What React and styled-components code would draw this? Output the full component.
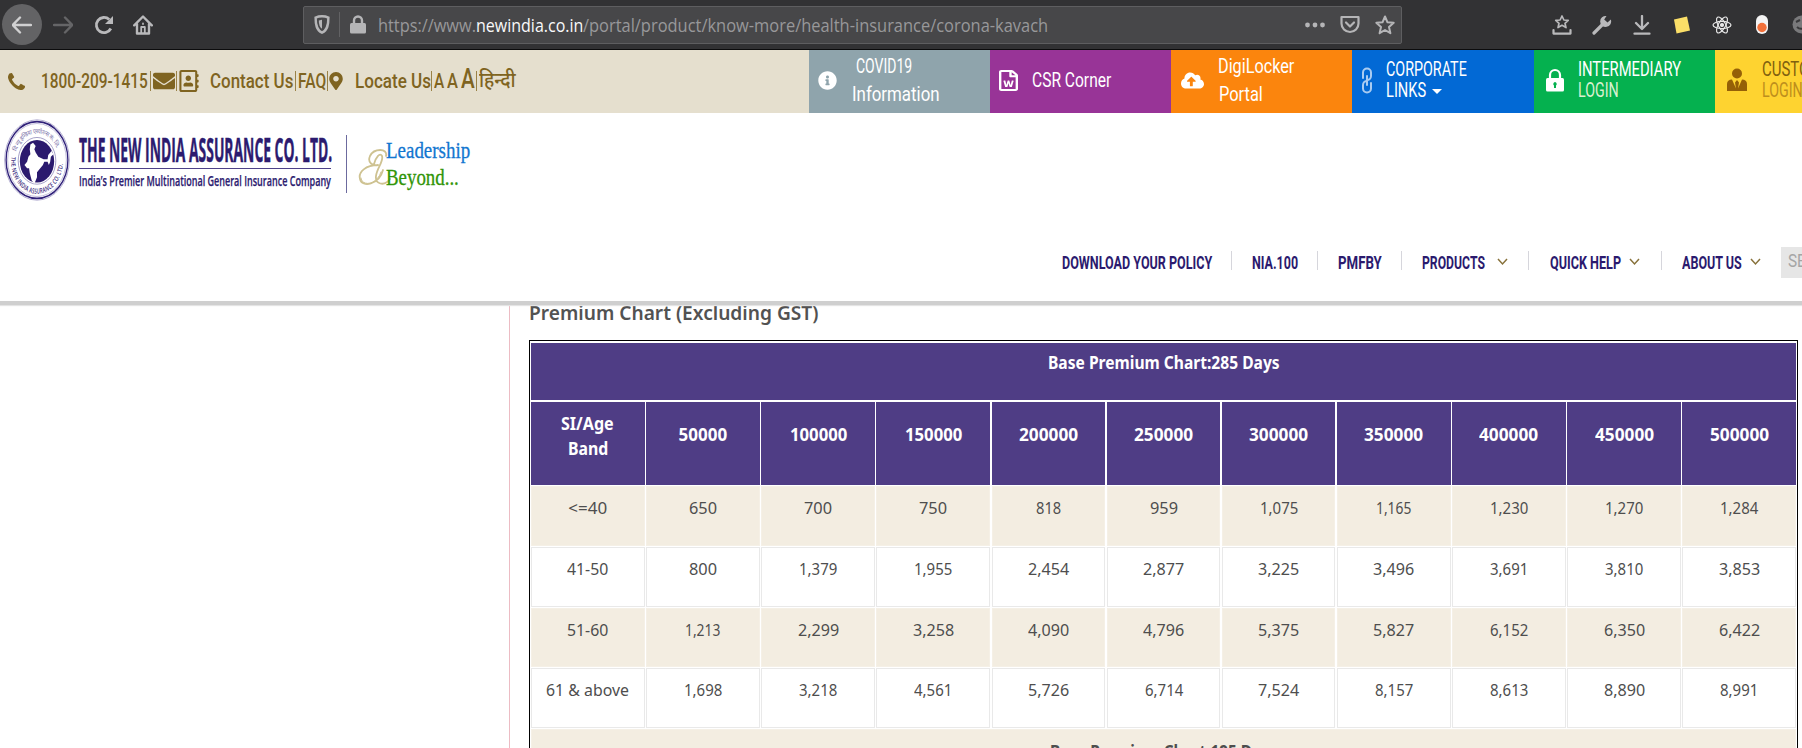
import React, { useLayoutEffect, useRef, useState } from "react";
import styled, { createGlobalStyle } from "styled-components";
import { FaInfoCircle, FaRegFileWord, FaCloudUploadAlt, FaEnvelope, FaRegAddressBook, FaMapMarkerAlt } from "react-icons/fa";

const Global = createGlobalStyle`
  *{box-sizing:border-box}
  body{margin:0;background:#fff;overflow:hidden;font-family:"Noto Sans","Open Sans",sans-serif}
  svg{display:block;flex:none}
`;

/* Text condensed to a fixed width */
const FitBox = styled.span`
  display:inline-block;flex:none;width:${p => p.$w}px;margin-left:${p => p.$ml || 0}px;
  white-space:nowrap;text-align:left;
`;
const FitInner = styled.span`display:inline-block;transform-origin:0 50%;white-space:pre;`;
function Fit({ w, ml, children, className }) {
  const ref = useRef(null);
  const [scale, setScale] = useState(1);
  useLayoutEffect(() => {
    if (ref.current.offsetWidth) setScale(w / ref.current.offsetWidth);
  }, [w]);
  return (
    <FitBox $w={w} $ml={ml} className={className}>
      <FitInner ref={ref} style={{ transform: `scaleX(${scale})` }}>{children}</FitInner>
    </FitBox>
  );
}

const Page = styled.div`width:1802px;height:748px;overflow:hidden;display:flex;flex-direction:column;background:#fff;`;

/* Browser toolbar */
const Chrome = styled.div`height:50px;flex:none;background:#323234;border-bottom:1px solid #0c0c0d;display:flex;align-items:center;padding-left:2px;color:#b9b9bb;overflow:hidden;`;
const BackButton = styled.span`width:40px;height:41px;border-radius:50%;background:#636365;display:flex;align-items:center;justify-content:center;color:#d0d0d1;flex:none;`;
const Glyph = styled.span`flex:none;margin-left:${p => p.$ml}px;color:${p => p.$c || "inherit"};display:block;`;
const UrlBar = styled.div`width:1099px;height:38px;margin:0 0 0 150px;flex:none;background:#474749;border:1px solid #5e5e60;border-radius:2px;display:flex;align-items:center;padding-left:10px;font-family:"Open Sans",sans-serif;font-size:17.5px;color:#98989a;`;
const UrlDivider = styled.span`width:1px;height:25px;background:#626264;margin-left:9px;`;
const Host = styled.span`color:#f9f9fa;`;
const UrlText = styled.div`display:flex;margin:0 0 0 12px;width:742px;flex:none;`;
const Padlock = styled.svg`margin-left:10px;`;

/* Utility strip */
const TopBar = styled.div`height:63px;flex:none;background:#e5dfce;display:flex;overflow:hidden;`;
const Contact = styled.div`width:809px;flex:none;display:flex;align-items:center;padding:0 0 1px 8px;color:#7f6421;font:500 20px Roboto,"Noto Sans Devanagari","Noto Sans",sans-serif;`;
const Bar = styled.span`width:1px;height:20px;background:#9a8247;margin-left:${p => p.$ml}px;flex:none;`;
const Size = styled(Fit)`font-size:${p => p.$fs}px;position:relative;top:${p => p.$up || 0}px;`;
const Tile = styled.div`width:${p => p.$w || 181}px;flex:none;background:${p => p.$bg};color:${p => p.$c || "#fff"};display:flex;align-items:center;padding:0 0 3px ${p => p.$pl}px;font:400 20.5px Roboto,sans-serif;`;
const Lines = styled.div`display:flex;flex-direction:column;margin-left:${p => p.$ml}px;line-height:${p => p.$lh}px;`;
const Line = styled.div`display:flex;align-items:center;height:${p => p.$h}px;color:${p => p.$c || "inherit"};`;
const Caret = styled.span`border:5px solid transparent;border-top-color:#fff;border-bottom:0;margin-left:6px;margin-top:1px;`;

/* Site header */
const Header = styled.header`height:192px;flex:none;background:#fff;border-bottom:4px solid #cfcfcf;box-shadow:0 1px 1px #e4e4e4;position:relative;z-index:1;`;
const Brand = styled.div`height:94px;display:flex;padding:6px 0 0 4px;`;
const BrandText = styled.div`width:252px;margin:10px 0 0 9px;color:#2c1b6f;`;
const BrandName = styled.div`font:700 34.5px/39px "Open Sans",sans-serif;height:40px;border-bottom:1px solid #4d4188;-webkit-text-stroke:.5px #2c1b6f;`;
const Tagline = styled.div`font:600 14.5px/20px "Open Sans",sans-serif;margin-top:2px;-webkit-text-stroke:.25px #2c1b6f;`;
const BrandRule = styled.div`width:1px;height:58px;background:#6c6a9e;margin:16px 0 0 15px;`;
const Slogan = styled.div`font:23px/27px "Liberation Serif",serif;margin:18px 0 0 -4px;`;
const SloganLine = styled.div`color:${p => p.$c};-webkit-text-stroke:.3px ${p => p.$c};height:27px;`;
const Amp = styled.div`width:32px;margin:29px 0 0 11px;`;
const Nav = styled.nav`display:flex;align-items:center;height:32px;margin-top:39px;padding-left:1062px;font:700 19px Roboto,sans-serif;color:#2b1a6e;`;
const NavSep = styled.span`width:1px;height:19px;background:#d6d6dc;margin-left:${p => p.$ml}px;margin-bottom:4px;flex:none;`;
const Search = styled.div`width:40px;height:31px;background:#e6e6e6;margin-left:20px;padding-left:7px;flex:none;font:400 18px/27px Roboto,sans-serif;color:#a5a5a5;overflow:hidden;`;

/* Content */
const Content = styled.main`flex:1;display:flex;min-height:0;`;
const Aside = styled.div`width:510px;flex:none;border-right:1px solid #ecbcc4;`;
const Main = styled.section`width:1292px;padding-left:19px;color:#525252;font-family:"Noto Sans","Open Sans",sans-serif;`;
const Heading = styled.h3`margin:0;height:35px;font-weight:600;font-size:20px;line-height:15px;`;
const Table = styled.div`width:1269px;height:500px;border:1px solid #000;padding:2px 1px 0;font-size:17px;line-height:25px;`;
const Row = styled.div`display:grid;grid-template-columns:${p => p.$full ? "1fr" : "repeat(11,1fr)"};column-gap:1.4px;height:${p => p.$h}px;padding-bottom:${p => p.$gap || 1}px;`;
const Cell = styled.div`
  text-align:center;padding-top:${p => p.$pt}px;
  background:${p => p.$tone === "head" ? "#4f3d85" : p.$tone === "beige" ? "#f3ede1" : "#fff"};
  color:${p => p.$tone === "head" ? "#fff" : "#4e4e4e"};
  border:${p => p.$tone === "head" ? "0" : "1px solid " + (p.$tone === "beige" ? "#f5f0e6" : "#e9e9e9")};
  font-weight:${p => p.$bold ? 700 : 400};
`;

const advance = (s, bold) => {
  const known = { "<=40": 39, "41-50": 41, "51-60": 41, "61 & above": 83 };
  if (known[s]) return known[s];
  return [...s].reduce((t, c) => t + (c === "1" ? (bold ? 8 : 6.4) : c === "," ? 3.6 : bold ? 9.8 : 9.3), 0);
};

const bands = ["50000", "100000", "150000", "200000", "250000", "300000", "350000", "400000", "450000", "500000"];
const premiums = [
  ["<=40", "650", "700", "750", "818", "959", "1,075", "1,165", "1,230", "1,270", "1,284"],
  ["41-50", "800", "1,379", "1,955", "2,454", "2,877", "3,225", "3,496", "3,691", "3,810", "3,853"],
  ["51-60", "1,213", "2,299", "3,258", "4,090", "4,796", "5,375", "5,827", "6,152", "6,350", "6,422"],
  ["61 & above", "1,698", "3,218", "4,561", "5,726", "6,714", "7,524", "8,157", "8,613", "8,890", "8,991"],
];

const Stroke = ({ s = 20, sw = 2.4, children, h }) => (
  <svg width={s} height={h || s} viewBox={`0 0 20 ${h || 20}`} fill="none" stroke="currentColor" strokeWidth={sw} strokeLinecap="round" strokeLinejoin="round">{children}</svg>
);
const Chevron = () => (
  <svg width="11" height="8" viewBox="0 0 11 8" fill="none" stroke="#87713a" strokeWidth="1.5"><path d="M1 1l4.5 5L10 1" /></svg>
);

const Emblem = () => (
  <svg width="66" height="82" viewBox="0 0 100 100" preserveAspectRatio="none">
    <defs>
      <path id="arcLow" d="M14 46A36.5 36.5 0 1 0 86 46" />
      <path id="arcHigh" d="M16 39A36 36 0 0 1 84 39" />
    </defs>
    <circle cx="50" cy="50" r="49" fill="#fff" stroke="#9a94c2" strokeWidth="1" />
    <circle cx="50" cy="50" r="46.8" fill="none" stroke="#30217a" strokeWidth="2" />
    <circle cx="50" cy="50" r="44.5" fill="none" stroke="#9a94c2" strokeWidth=".8" />
    <circle cx="50" cy="51" r="28.500" fill="none" stroke="#8982b6" strokeWidth="1" />
    <circle cx="50" cy="51.500" r="26" fill="#2b1a6e" />
    <text fontFamily="Open Sans, sans-serif" fontWeight="600" fontSize="9" dominantBaseline="middle" fill="#3b2d80"><textPath href="#arcLow" textLength="118" lengthAdjust="spacingAndGlyphs">THE NEW INDIA ASSURANCE CO. LTD.</textPath></text>
    <text fontFamily="Noto Sans Devanagari, sans-serif" fontSize="8" dominantBaseline="middle" fill="#7a72a8"><textPath href="#arcHigh" textLength="84">दि न्यू इन्डिया एश्योरन्स कं. लि.</textPath></text>
    <path fill="#fff" d="M40 31l4-2 4 4-2 4 2 4 4 5 8 3 6 0 1-5 5-5 3 4-4 3-1 6-2 4-2-4-5 0-2 4-5 5-4 4 0 6-4 8-4-4-3-9-1-6-3 0-4-4 4-4 2-6 3-3-1-6z" />
  </svg>
);

export default function App() {
  return (
    <Page>
      <Global />
      <Chrome>
        <BackButton><Stroke><path d="M19 10H1M8 2.5L.8 10 8 17.5" /></Stroke></BackButton>
        <Glyph $ml={11} $c="#656567"><Stroke><path d="M1 10h18M12 2.5l7.2 7.5-7.2 7.5" /></Stroke></Glyph>
        <Glyph $ml={21}>
          <svg width="20" height="20" viewBox="0 0 20 20" fill="none" stroke="currentColor" strokeWidth="2.8"><path d="M16.8 13.5A7.6 7.6 0 1 1 15.2 4.5" /><path d="M19 1v8h-8z" fill="currentColor" stroke="none" /></svg>
        </Glyph>
        <Glyph $ml={19}>
          <svg width="20" height="20" viewBox="0 0 20 20" fill="none" stroke="currentColor" strokeWidth="2.4" strokeLinejoin="round" strokeLinecap="round"><path d="M1.2 10.3L10 1.5l8.8 8.8M4 9v9.5h12V9" /><path d="M8.2 18v-6h3.6v6M10 8.5v.5" strokeWidth="1.8" /></svg>
        </Glyph>
        <UrlBar>
          <svg width="16" height="19" viewBox="0 0 16 19"><path d="M8 1.3c2.3 0 4.4.4 6.4 1.3 0 7-.8 12.5-6.4 15.1C2.400 15.100 1.600 9.600 1.600 2.600 3.600 1.700 5.700 1.300 8 1.300z" fill="none" stroke="#b5b5b7" strokeWidth="2.4" /><path d="M8 4.800v9c-2.200-1.500-3.200-4.300-3.200-8.400z" fill="#b5b5b7" /></svg>
          <UrlDivider />
          <Padlock width="16" height="19" viewBox="0 0 16 19"><rect y="8" width="16" height="10.500" rx="1.500" fill="#b5b5b7" /><path d="M4 9V5.500a4 4 0 0 1 8 0V9" fill="none" stroke="#b5b5b7" strokeWidth="2.400" /></Padlock>
          <UrlText>
            <Fit w={98}>https://www.</Fit>
            <Fit w={107}><Host>newindia.co.in</Host></Fit>
            <Fit w={465}>/portal/product/know-more/health-insurance/corona-kavach</Fit>
          </UrlText>
          <Glyph $ml={185} $c="#b5b5b7"><svg width="20" height="6" viewBox="0 0 20 6" fill="currentColor"><circle cx="2.500" cy="3" r="2.400" /><circle cx="10" cy="3" r="2.400" /><circle cx="17.500" cy="3" r="2.400" /></svg></Glyph>
          <Glyph $ml={15} $c="#b5b5b7"><Stroke h={19} sw={2.200}><path d="M1.500 2h17v6.500a8.500 8.500 0 0 1-17 0zM6 7.500l4 4 4-4" /></Stroke></Glyph>
          <Glyph $ml={15} $c="#b5b5b7"><Stroke sw={2}><path d="M10 1.500l2.500 5.800 6.200.5-4.700 4.200 1.400 6.200L10 15l-5.400 3.200L6 12 1.300 7.800l6.200-.5z" /></Stroke></Glyph>
        </UrlBar>
        <Glyph $ml={150}><Stroke sw={1.700}><path d="M10 1l1.900 4 4.300.4L13 8.300l1 4.300-4-2.300-4 2.300 1-4.300-3.200-2.900L8.100 5z" /><path d="M1.500 15v3.600h17V15" strokeWidth="2.200" /></Stroke></Glyph>
        <Glyph $ml={20}>
          <svg width="20" height="20" viewBox="0 0 20 20"><path d="M2 18l8.500-8.500" stroke="currentColor" strokeWidth="3.200" strokeLinecap="round" /><path d="M18.800 4.500A5.500 5.500 0 1 1 14.500 1l-2.300 3.500 3.300 3z" fill="currentColor" /></svg>
        </Glyph>
        <Glyph $ml={20}><Stroke sw={2.300}><path d="M10 1v12.500M4 8l6 6 6-6M2.500 18.700h15" /></Stroke></Glyph>
        <Glyph $ml={20}><svg width="20" height="20" viewBox="0 0 20 20"><path d="M2 4.500L15 1.500 18 15.500 4.500 18.500z" fill="#fbdf68" /></svg></Glyph>
        <Glyph $ml={20} $c="#e8e8e8">
          <svg width="20" height="20" viewBox="0 0 20 20" fill="none" stroke="currentColor" strokeWidth="1.200"><ellipse cx="10" cy="10" rx="9" ry="3.600" /><ellipse cx="10" cy="10" rx="9" ry="3.600" transform="rotate(60 10 10)" /><ellipse cx="10" cy="10" rx="9" ry="3.600" transform="rotate(120 10 10)" /><circle cx="10" cy="10" r="1.500" fill="currentColor" /></svg>
        </Glyph>
        <Glyph $ml={24}><svg width="12" height="19" viewBox="0 0 12 19"><rect width="12" height="19" rx="6" fill="#f4f4f4" /><circle cx="6" cy="12.500" r="4.700" fill="#f2703a" /></svg></Glyph>
        <Glyph $ml={24} $c="#79797b"><svg width="19" height="19" viewBox="0 0 19 19"><circle cx="9.500" cy="9.500" r="9" fill="currentColor" /><path d="M4 7l4-2M5 12c3 3 7 2 9-1" stroke="#39393b" strokeWidth="2" fill="none" /></svg></Glyph>
      </Chrome>

      <TopBar>
        <Contact>
          <svg width="17" height="17" viewBox="0 128 1408 1408" fill="currentColor"><path d="M1408 1240q0 27-10 70.500t-20.500 68.500q-21 50-122 106-94 51-186 51-27 0-53-3.500t-57.500-12.500-47-14.500-55.500-20.500-49-18q-98-35-175-83-127-79-264-216t-216-264q-48-77-83-175-3-9-18-49t-20.500-55.500-14.500-47-12.500-57.500-3.500-53q0-92 51-186 56-101 106-122 25-10 68.500-20.500t70.500-10.500q14 0 21 3 18 6 53 76 11 19 30 54t35 63.500 31 53.500q3 4 17.500 25t21.500 35.500 7 28.500q0 20-28.500 50t-62 55-62 53-28.500 46q0 9 5 22.500t8.500 20.500 14 24 11.500 19q76 137 174 235t235 174q2 1 19 11.500t24 14 20.500 8.500 22.500 5q18 0 46-28.500t53-62 55-62 50-28.500q14 0 28.500 7t35.500 21.500 25 17.500q25 15 53.500 31t63.500 35 54 30q70 35 76 53 3 7 3 21z" /></svg>
          <Fit w={107} ml={16}>1800-209-1415</Fit>
          <Bar $ml={2} />
          <Glyph $ml={2}><FaEnvelope size={22} /></Glyph>
          <Bar $ml={1} />
          <Glyph $ml={1}><FaRegAddressBook size={22} /></Glyph>
          <Fit w={83} ml={10}>Contact Us</Fit>
          <Bar $ml={2} />
          <Fit w={28} ml={2}>FAQ</Fit>
          <Bar $ml={1} />
          <Glyph $ml={1}><FaMapMarkerAlt size={18} style={{ width: 14 }} /></Glyph>
          <Fit w={76} ml={12}>Locate Us</Fit>
          <Bar $ml={0} />
          <Fit w={10} ml={2}>A</Fit>
          <Size $fs={21} w={11} ml={3}>A</Size>
          <Size $fs={28} $up={-3} w={14} ml={3}>A</Size>
          <Bar $ml={1} />
          <Fit w={37} ml={2}>हिन्दी</Fit>
        </Contact>
        <Tile $bg="#8fa4ac" $pl={9}>
          <FaInfoCircle size={19} />
          <Lines $ml={15} $lh={28}><Line $h={28}><Fit w={56} ml={4}>COVID19</Fit></Line><Line $h={28}><Fit w={88}>Information</Fit></Line></Lines>
        </Tile>
        <Tile $bg="#983497" $pl={9}>
          <FaRegFileWord style={{ width: 19, height: 21 }} viewBox="0 0 384 512" preserveAspectRatio="none" />
          <Fit w={79} ml={14}>CSR Corner</Fit>
        </Tile>
        <Tile $bg="#fb850d" $pl={10}>
          <FaCloudUploadAlt size={23} />
          <Lines $ml={14} $lh={28}><Line $h={28}><Fit w={76}>DigiLocker</Fit></Line><Line $h={28}><Fit w={44} ml={1}>Portal</Fit></Line></Lines>
        </Tile>
        <Tile $w={182} $bg="#0269d5" $pl={9}>
          <svg width="12" height="27" viewBox="0 0 12 27" fill="none" stroke="#a9cbf1" strokeWidth="2" strokeLinecap="round"><path d="M2 11V5.500a4 4 0 0 1 8 0V9c0 2.500-2 4-4 4M10 16v5.500a4 4 0 0 1-8 0V18c0-2.500 2-4 4-4M6 9v9" /></svg>
          <Lines $ml={13} $lh={21}><Line $h={21}><Fit w={81}>CORPORATE</Fit></Line><Line $h={21}><Fit w={40}>LINKS</Fit><Caret /></Line></Lines>
        </Tile>
        <Tile $bg="#05b14f" $pl={12}>
          <svg width="18" height="24" viewBox="0 0 18 24"><path d="M4 11V7a5 5 0 0 1 10 0v4" fill="none" stroke="#fff" strokeWidth="2.200" /><rect y="10" width="18" height="13.500" rx="1.500" fill="#fff" /><path d="M9 14a2 2 0 0 1 1 3.500V20H8v-2.500A2 2 0 0 1 9 14z" fill="#05b14f" /></svg>
          <Lines $ml={14} $lh={21}><Line $h={21}><Fit w={103}>INTERMEDIARY</Fit></Line><Line $h={21} $c="#d9f0cf"><Fit w={41}>LOGIN</Fit></Line></Lines>
        </Tile>
        <Tile $bg="#fed330" $c="#80600f" $pl={12}>
          <svg width="20" height="24" viewBox="0 0 20 24" fill="#956007"><circle cx="10" cy="5.500" r="5" /><path d="M0 23v-7c0-3 2-4.500 5-4.500l4 9-1-6 2-2.500 2 2.500-1 6 4-9c3 0 5 1.500 5 4.500v7z" /></svg>
          <Lines $ml={15} $lh={21}><Line $h={21}><Fit w={78}>CUSTOMER</Fit></Line><Line $h={21} $c="#bd8e1d"><Fit w={41}>LOGIN</Fit></Line></Lines>
        </Tile>
      </TopBar>

      <Header>
        <Brand>
          <Emblem />
          <BrandText>
            <BrandName><Fit w={253}>THE NEW INDIA ASSURANCE CO. LTD.</Fit></BrandName>
            <Tagline><Fit w={252}>India’s Premier Multinational General Insurance Company</Fit></Tagline>
          </BrandText>
          <BrandRule />
          <Amp>
            <svg width="33" height="40" viewBox="0 0 33 40" fill="none" stroke="#cec291" strokeWidth="1.800" strokeLinecap="round"><path d="M28 8C30 0 16 0 12 8c-3 7 3 10 8 9M20 17C8 17 0 24 2 31c2 9 19 6 23-9M16 16c2-7 6-12 8-8 2 5-5 12-6 20-1 8 8 11 14 3" /><path d="M3 30c1 9 16 7 20-6" strokeWidth="1" /></svg>
          </Amp>
          <Slogan>
            <SloganLine $c="#1276d0"><Fit w={84}>Leadership</Fit></SloganLine>
            <SloganLine $c="#319507"><Fit w={73}>Beyond...</Fit></SloganLine>
          </Slogan>
        </Brand>
        <Nav>
          <Fit w={150}>DOWNLOAD YOUR POLICY</Fit><NavSep $ml={19} />
          <Fit w={46} ml={20}>NIA.100</Fit><NavSep $ml={19} />
          <Fit w={44} ml={20}>PMFBY</Fit><NavSep $ml={19} />
          <Fit w={63} ml={20}>PRODUCTS</Fit><Glyph $ml={12}><Chevron /></Glyph><NavSep $ml={20} />
          <Fit w={71} ml={21}>QUICK HELP</Fit><Glyph $ml={8}><Chevron /></Glyph><NavSep $ml={21} />
          <Fit w={60} ml={20}>ABOUT US</Fit><Glyph $ml={8}><Chevron /></Glyph>
          <Search><Fit w={58}>SEARCH</Fit></Search>
        </Nav>
      </Header>

      <Content>
        <Aside />
        <Main>
          <Heading><Fit w={289}>Premium Chart (Excluding GST)</Fit></Heading>
          <Table>
            <Row $full $h={59} $gap={2}><Cell $tone="head" $bold $pt={7}><Fit w={232}>Base Premium Chart:285 Days</Fit></Cell></Row>
            <Row $h={84}>
              <Cell $tone="head" $bold $pt={9}><Fit w={53}>SI/Age</Fit><br /><Fit w={40}>Band</Fit></Cell>
              {bands.map(b => <Cell key={b} $tone="head" $bold $pt={20}><Fit w={advance(b, true)}>{b}</Fit></Cell>)}
            </Row>
            {premiums.map((r, i) => (
              <Row key={r[0]} $h={60.8}>
                {r.map((v, j) => <Cell key={j} $tone={i % 2 ? "white" : "beige"} $pt={8}><Fit w={advance(v)}>{v}</Fit></Cell>)}
              </Row>
            ))}
            <Row $full $h={60.8}><Cell $tone="beige" $bold $pt={9}><Fit w={228}>Base Premium Chart:195 Days</Fit></Cell></Row>
          </Table>
        </Main>
      </Content>
    </Page>
  );
}
